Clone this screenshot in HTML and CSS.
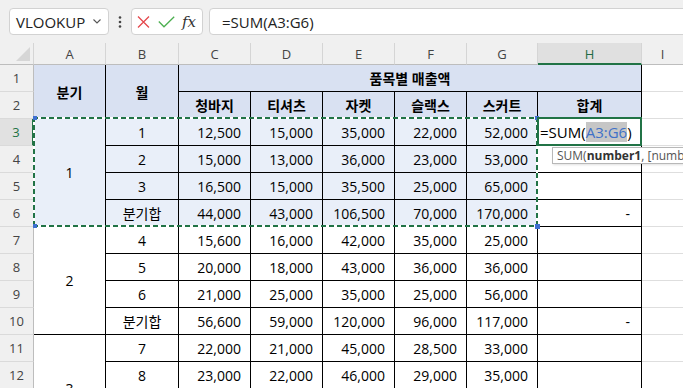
FILE: index.html
```html
<!DOCTYPE html>
<html lang="ko">
<head>
    <meta charset="UTF-8">
    <meta name="viewport" content="width=device-width, initial-scale=1.0">
    <title>분기별 품목 매출</title>
    <link rel="stylesheet" href="styles.css">
</head>
<body>
    <!-- 이름 상자 + 수식 입력줄 -->
    <div class="topbar">
        <div class="namebox">
            <span>VLOOKUP</span>
            <svg width="8" height="5" viewBox="0 0 8 5"><polyline points="0.5,0.5 4,4 7.5,0.5" fill="none" stroke="#555" stroke-width="1.1"/></svg>
        </div>
        <svg class="dots" width="4" height="14" viewBox="0 0 4 14">
            <circle cx="2" cy="2.5" r="1.3" fill="#444"/>
            <circle cx="2" cy="7" r="1.3" fill="#444"/>
            <circle cx="2" cy="11.5" r="1.3" fill="#444"/>
        </svg>
        <div class="fxbox">
            <svg width="13" height="12" viewBox="0 0 13 12"><path d="M1 0.5 L12 11.5 M12 0.5 L1 11.5" stroke="#e5484d" stroke-width="1.3" fill="none"/></svg>
            <svg width="17" height="12" viewBox="0 0 17 12"><polyline points="0.8,5.5 6,10.8 16.2,0.8" stroke="#4caf50" stroke-width="1.3" fill="none"/></svg>
            <span class="fx">fx</span>
        </div>
        <div class="formula">=SUM(A3:G6)</div>
    </div>

    <!-- 시트 -->
    <div class="sheet">
        <div class="corner"><svg width="14" height="14" viewBox="0 0 14 14"><polygon points="0,14 14,0 14,14" fill="#d6d6d6"/></svg></div>
        <div class="colhead">A</div>
        <div class="colhead">B</div>
        <div class="colhead">C</div>
        <div class="colhead">D</div>
        <div class="colhead">E</div>
        <div class="colhead">F</div>
        <div class="colhead">G</div>
        <div class="colhead active">H</div>
        <div class="colhead last">I</div>

        <!-- 1행 -->
        <div class="rh">1</div>
        <div class="c hd span-r2">분기</div>
        <div class="c hd span-r2">월</div>
        <div class="c hd span-c6">품목별 매출액</div>
        <div class="g"></div>

        <!-- 2행 -->
        <div class="rh">2</div>
        <div class="c hd">청바지</div>
        <div class="c hd">티셔츠</div>
        <div class="c hd">자켓</div>
        <div class="c hd">슬랙스</div>
        <div class="c hd">스커트</div>
        <div class="c hd">합계</div>
        <div class="g"></div>

        <!-- 1분기 -->
        <div class="rh active">3</div>
        <div class="c sel span-r4">1</div>
        <div class="c sel">1</div>
        <div class="c sel num">12,500</div>
        <div class="c sel num">15,000</div>
        <div class="c sel num">35,000</div>
        <div class="c sel num">22,000</div>
        <div class="c sel num">52,000</div>
        <div class="c editing">
            <span>=SUM(<span class="ref">A3:G6</span>)</span>
            <div class="tip">SUM(<b>number1</b>, [number2], ...)</div>
        </div>
        <div class="g"></div>

        <div class="rh">4</div>
        <div class="c sel">2</div>
        <div class="c sel num">15,000</div>
        <div class="c sel num">13,000</div>
        <div class="c sel num">36,000</div>
        <div class="c sel num">23,000</div>
        <div class="c sel num">53,000</div>
        <div class="c"></div>
        <div class="g"></div>

        <div class="rh">5</div>
        <div class="c sel">3</div>
        <div class="c sel num">16,500</div>
        <div class="c sel num">15,000</div>
        <div class="c sel num">35,500</div>
        <div class="c sel num">25,000</div>
        <div class="c sel num">65,000</div>
        <div class="c"></div>
        <div class="g"></div>

        <div class="rh">6</div>
        <div class="c sel">분기합</div>
        <div class="c sel num">44,000</div>
        <div class="c sel num">43,000</div>
        <div class="c sel num">106,500</div>
        <div class="c sel num">70,000</div>
        <div class="c sel num">170,000</div>
        <div class="c num dash">-</div>
        <div class="g"></div>

        <!-- 2분기 -->
        <div class="rh">7</div>
        <div class="c span-r4">2</div>
        <div class="c">4</div>
        <div class="c num">15,600</div>
        <div class="c num">16,000</div>
        <div class="c num">42,000</div>
        <div class="c num">35,000</div>
        <div class="c num">25,000</div>
        <div class="c"></div>
        <div class="g"></div>

        <div class="rh">8</div>
        <div class="c">5</div>
        <div class="c num">20,000</div>
        <div class="c num">18,000</div>
        <div class="c num">43,000</div>
        <div class="c num">36,000</div>
        <div class="c num">36,000</div>
        <div class="c"></div>
        <div class="g"></div>

        <div class="rh">9</div>
        <div class="c">6</div>
        <div class="c num">21,000</div>
        <div class="c num">25,000</div>
        <div class="c num">35,000</div>
        <div class="c num">25,000</div>
        <div class="c num">56,000</div>
        <div class="c"></div>
        <div class="g"></div>

        <div class="rh">10</div>
        <div class="c">분기합</div>
        <div class="c num">56,600</div>
        <div class="c num">59,000</div>
        <div class="c num">120,000</div>
        <div class="c num">96,000</div>
        <div class="c num">117,000</div>
        <div class="c num dash">-</div>
        <div class="g"></div>

        <!-- 3분기 -->
        <div class="rh">11</div>
        <div class="c span-r4">3</div>
        <div class="c">7</div>
        <div class="c num">22,000</div>
        <div class="c num">21,000</div>
        <div class="c num">45,000</div>
        <div class="c num">28,500</div>
        <div class="c num">33,000</div>
        <div class="c"></div>
        <div class="g"></div>

        <div class="rh">12</div>
        <div class="c">8</div>
        <div class="c num">23,000</div>
        <div class="c num">22,000</div>
        <div class="c num">46,000</div>
        <div class="c num">29,000</div>
        <div class="c num">35,000</div>
        <div class="c"></div>
        <div class="g"></div>

        <!-- 복사 범위 표시 (A3:G6) -->
        <div class="marquee">
            <i class="handle tl"></i>
            <i class="handle tr"></i>
            <i class="handle bl"></i>
            <i class="handle br"></i>
        </div>
    </div>
</body>
</html>
```

FILE: styles.css
```css
/* 기본 */
html, body {
    margin: 0;
    overflow: hidden;
    background-color: #fff;
}

body {
    font-family: "Open Sans", "Noto Sans CJK KR", sans-serif;
    color: #000;
}

/* 수식 입력줄 */
.topbar {
    height: 43px;
    box-sizing: border-box;
    padding: 8px 0 0 9px;
    display: flex;
    align-items: flex-start;
    background-color: #f0f0f0;
}

.namebox {
    width: 100px;
    height: 27px;
    box-sizing: border-box;
    padding: 0 7px 0 6px;
    display: flex;
    align-items: center;
    justify-content: space-between;
    background-color: #fff;
    border: 1px solid #d2d2d2;
    border-radius: 4px;
    font-size: 15px;
    color: #222;
}

.dots {
    margin: 7px 0 0 9px;
}

.fxbox {
    width: 72px;
    height: 27px;
    box-sizing: border-box;
    margin-left: 9px;
    padding-left: 5px;
    display: flex;
    align-items: center;
    gap: 8px;
    background-color: #fff;
    border: 1px solid #d2d2d2;
    border-radius: 4px;
}

.fx {
    font-family: "DejaVu Serif", "Liberation Serif", serif;
    font-style: italic;
    font-size: 15px;
    color: #333;
    margin-left: -1px;
}

.formula {
    flex: 1;
    height: 27px;
    box-sizing: border-box;
    margin: 0 -8px 0 6px;
    padding-left: 12px;
    display: flex;
    align-items: center;
    background-color: #fff;
    border: 1px solid #d2d2d2;
    border-radius: 4px;
    font-size: 15px;
    color: #222;
}

/* 시트 격자 */
.sheet {
    position: relative;
    display: grid;
    grid-template-columns: 34px 72px 73px 72px 72px 72px 72px 71px 104px 1fr;
    grid-template-rows: 22px;
    grid-auto-rows: 27px;
}

.sheet > div {
    box-sizing: border-box;
}

.corner {
    display: flex;
    align-items: flex-end;
    justify-content: flex-end;
    padding: 0 3px 3px 0;
    background-color: #f0f0f0;
    border-right: 1px solid #d5d5d5;
    border-bottom: 1px solid #bdbdbd;
}

.colhead {
    display: flex;
    align-items: center;
    justify-content: center;
    background-color: #f0f0f0;
    border-right: 1px solid #d5d5d5;
    border-bottom: 1px solid #bdbdbd;
    font-size: 13px;
    color: #444;
}

.colhead.active {
    background-color: #e0e0e0;
    border-bottom: 2px solid #217346;
    color: #1f6b45;
    padding-top: 1px;
}

.colhead.last {
    border-right: none;
}

.rh {
    display: flex;
    align-items: center;
    justify-content: center;
    background-color: #f0f0f0;
    border-right: 1px solid #bdbdbd;
    border-bottom: 1px solid #dadada;
    font-size: 13px;
    color: #444;
}

.rh.active {
    background-color: #e1e1e1;
    border-right: 2px solid #217346;
    color: #217346;
}

/* 표 셀 */
.c {
    display: flex;
    align-items: center;
    justify-content: center;
    border-right: 1px solid #000;
    border-bottom: 1px solid #000;
    font-size: 14px;
    white-space: nowrap;
}

.c.hd {
    background-color: #d9e1f2;
    font-weight: bold;
}

.c.sel {
    background-color: #e9eff9;
}

.c.num {
    justify-content: flex-end;
    padding-right: 9px;
}

.c.dash {
    padding-right: 11px;
}

.span-r2 { grid-row: span 2; }
.span-r4 { grid-row: span 4; }
.span-c6 { grid-column: span 6; }

.g {
    border-bottom: 1px solid #dedede;
}

/* 편집 중인 셀 */
.c.editing {
    position: relative;
    justify-content: flex-start;
    padding-left: 2px;
    font-size: 15px;
    overflow: visible;
    z-index: 3;
}

.c.editing::after {
    content: "";
    position: absolute;
    top: -2px;
    left: -1px;
    right: -1px;
    bottom: -1px;
    border: 2px solid #217346;
}

.ref {
    display: inline-block;
    line-height: 20px;
    background-color: #c6c6c6;
    color: #3f71c8;
}

.tip {
    position: absolute;
    top: 28px;
    left: 14px;
    height: 17px;
    box-sizing: border-box;
    padding: 0 4px;
    display: flex;
    align-items: center;
    background-color: #fff;
    border: 1px solid #b8b8b8;
    box-shadow: 1px 1px 2px rgba(0,0,0,0.12);
    font-size: 12px;
    color: #555;
    white-space: nowrap;
}

.tip b {
    color: #333;
}

/* 복사 범위 점선 */
.marquee {
    position: absolute;
    grid-column: 2 / 9;
    grid-row: 4 / 8;
    top: -2px;
    left: -1px;
    right: 0;
    bottom: 0;
    z-index: 2;
    pointer-events: none;
    background:
        repeating-linear-gradient(90deg, #217346 0 5px, #fff 5px 8px) top left / 100% 2px no-repeat,
        repeating-linear-gradient(90deg, #217346 0 5px, #fff 5px 8px) bottom left / 100% 2px no-repeat,
        repeating-linear-gradient(180deg, #217346 0 5px, #fff 5px 8px) top left / 2px 100% no-repeat,
        repeating-linear-gradient(180deg, #217346 0 5px, #fff 5px 8px) top right / 2px 100% no-repeat;
}

.handle {
    position: absolute;
    width: 4px;
    height: 4px;
    background-color: #3e6fd0;
}

.handle.tl { top: -1px; left: 0; }
.handle.tr { top: -1px; right: -1px; }
.handle.bl { bottom: -1px; left: 0; }
.handle.br { bottom: -2px; right: -2px; width: 5px; height: 5px; }
```
